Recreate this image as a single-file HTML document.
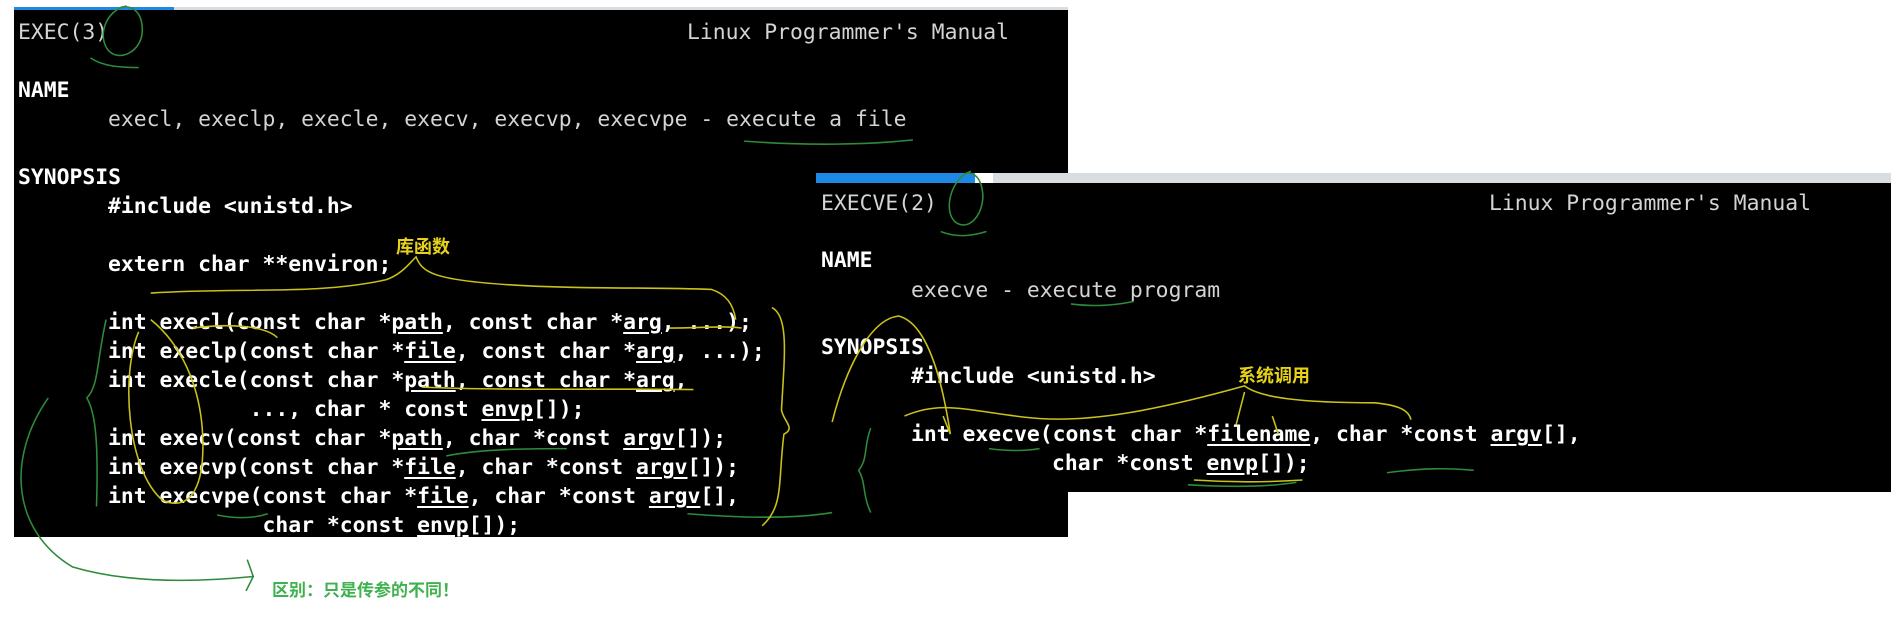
<!DOCTYPE html>
<html><head><meta charset="utf-8"><style>
body{margin:0;width:1891px;height:630px;background:#fff;position:relative;overflow:hidden}
.p{position:absolute;background:#000}
.t{position:absolute;font-family:"DejaVu Sans Mono","Liberation Mono",monospace;font-size:21.4px;line-height:29px;color:#d4d4d4;white-space:pre}
.b{font-weight:bold;color:#fff}
u{text-decoration:underline;text-underline-offset:3px}
.cn{position:absolute;font-family:"Liberation Sans","Noto Sans CJK SC",sans-serif;font-weight:bold;white-space:nowrap}
</style></head><body>
<div class="p" style="left:14px;top:7px;width:1054px;height:3px;background:#d8dde2"></div>
<div class="p" style="left:14px;top:7px;width:160px;height:4px;background:#1e88e5"></div>
<div class="p" style="left:14px;top:10px;width:1054px;height:527px"></div>
<div class="t" style="left:18px;top:18px">EXEC(3)</div>
<div class="t" style="left:687px;top:18px">Linux Programmer's Manual</div>
<div class="t b" style="left:18px;top:76px">NAME</div>
<div class="t" style="left:108px;top:105px">execl, execlp, execle, execv, execvp, execvpe - execute a file</div>
<div class="t b" style="left:18px;top:163px">SYNOPSIS</div>
<div class="t b" style="left:108px;top:192px">#include &lt;unistd.h&gt;</div>
<div class="t b" style="left:108px;top:250px">extern char **environ;</div>
<div class="t b" style="left:108px;top:308px">int execl(const char *<u>path</u>, const char *<u>arg</u>, ...);</div>
<div class="t b" style="left:108px;top:337px">int execlp(const char *<u>file</u>, const char *<u>arg</u>, ...);</div>
<div class="t b" style="left:108px;top:366px">int execle(const char *<u>path</u>, const char *<u>arg</u>,</div>
<div class="t b" style="left:108px;top:395px">           ..., char * const <u>envp</u>[]);</div>
<div class="t b" style="left:108px;top:424px">int execv(const char *<u>path</u>, char *const <u>argv</u>[]);</div>
<div class="t b" style="left:108px;top:453px">int execvp(const char *<u>file</u>, char *const <u>argv</u>[]);</div>
<div class="t b" style="left:108px;top:482px">int execvpe(const char *<u>file</u>, char *const <u>argv</u>[],</div>
<div class="t b" style="left:108px;top:511px">            char *const <u>envp</u>[]);</div>
<div class="p" style="left:816px;top:173px;width:1075px;height:10px;background:#d8dde2"></div>
<div class="p" style="left:816px;top:173px;width:159px;height:10px;background:#1e88e5"></div>
<div class="p" style="left:975px;top:173px;width:18px;height:10px;background:#fff"></div>
<div class="p" style="left:816px;top:183px;width:1075px;height:309px"></div>
<div class="t" style="left:821px;top:189px">EXECVE(2)</div>
<div class="t" style="left:1489px;top:189px">Linux Programmer's Manual</div>
<div class="t b" style="left:821px;top:246px">NAME</div>
<div class="t" style="left:911px;top:276px">execve - execute program</div>
<div class="t b" style="left:821px;top:333px">SYNOPSIS</div>
<div class="t b" style="left:911px;top:362px">#include &lt;unistd.h&gt;</div>
<div class="t b" style="left:911px;top:420px">int execve(const char *<u>filename</u>, char *const <u>argv</u>[],</div>
<div class="t b" style="left:1052px;top:449px">char *const <u>envp</u>[]);</div>
<div class="cn" style="left:396px;top:233px;font-size:18px;color:#e6d21a">库函数</div>
<div class="cn" style="left:1238px;top:362px;font-size:18px;color:#e6d21a">系统调用</div>
<div class="cn" style="left:272px;top:576px;font-size:17px;color:#3fb24f">区别：只是传参的不同！</div>
<svg width="1891" height="630" style="position:absolute;left:0;top:0" fill="none" stroke-width="1.3">
<g transform="scale(1.206)">
<g stroke="#2e8b3a">
<path d="M105 5 C88 8 80 30 90 42 C100 52 118 42 118 25 C118 10 110 4 100 6 M75 48 C85 55 100 56 115 56"/>
<path d="M617 117 C670 121 720 120 757 116"/>
<path d="M88 265 C80 300 82 320 72 330 C78 340 82 360 80 420"/>
<path d="M40 330 C5 380 10 440 60 470 C110 485 170 482 210 478 L205 464 M210 478 L204 490"/>
<path d="M370 378 C400 372 440 372 470 372 M180 427 C195 430 210 430 222 426 M570 426 C620 430 660 430 690 425"/>
<path d="M805 142 C788 148 782 175 792 184 C802 192 815 180 815 162 C814 148 808 142 800 144 M780 192 C793 197 805 196 818 192"/>
<path d="M888 252 C905 254 920 254 940 250"/>
<path d="M722 355 C716 370 720 380 712 390 C718 400 715 410 722 425"/>
<path d="M820 372 C835 374 850 374 862 372 M985 402 C1020 404 1050 404 1075 400 M1150 392 C1180 388 1200 388 1222 390"/>
</g>
<g stroke="#c9c21a">
<path d="M125 243 C200 238 260 245 320 232 C332 228 338 220 345 213 C350 226 360 232 420 236 C480 240 540 238 590 240 C602 244 608 252 610 265"/>
<path d="M115 275 C100 310 105 390 135 415 C160 425 170 400 168 360 C166 320 150 285 125 265"/>
<path d="M640 255 C655 262 650 300 648 340 C650 350 660 355 650 360 C645 400 650 420 632 436"/>
<path d="M160 272 C190 268 220 270 230 280 M555 272 C580 272 600 270 615 272 M350 321 C420 324 500 322 575 323"/>
<path d="M690 350 C700 310 720 265 745 262 C770 268 782 320 788 360 M788 360 L782 345"/>
<path d="M750 345 C780 332 800 340 850 346 C900 352 960 340 1032 320 C1045 330 1080 334 1140 334 C1160 336 1168 340 1170 348"/>
<path d="M1032 325 L1025 352 M1055 345 L1060 360 M990 398 C1020 400 1050 400 1080 398"/>
</g>
</g>
</svg>
</body></html>
